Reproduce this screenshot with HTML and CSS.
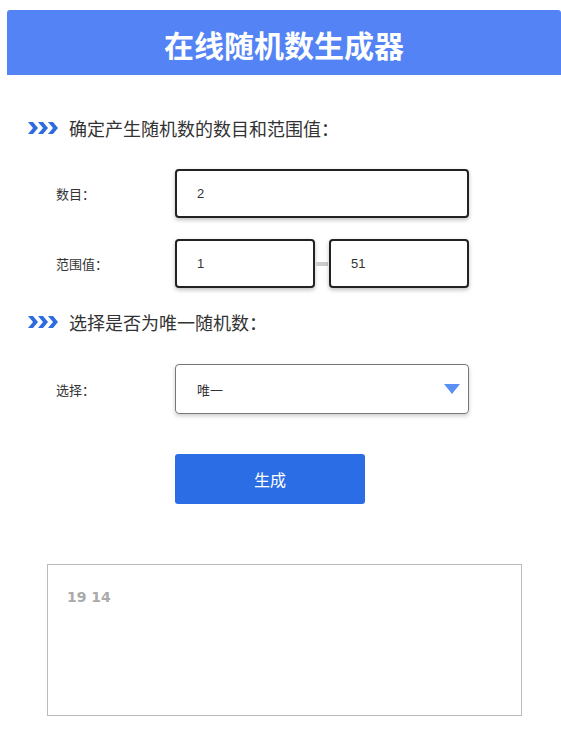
FILE: index.html
```html
<!DOCTYPE html>
<html lang="zh-CN">
<head>
    <meta charset="UTF-8">
    <meta name="viewport" content="width=device-width, initial-scale=1.0">
    <title>在线随机数生成器</title>
    <link rel="stylesheet" href="styles.css">
</head>
<body>
    <div class="page">
        <div class="header">在线随机数生成器</div>

        <div class="section-title">
            <svg class="arrows" width="32" height="12" viewBox="0 0 32 12">
                <path d="M1 0h5l5 6-5 6H1l5-6z M11 0h5l5 6-5 6h-5l5-6z M21 0h5l5 6-5 6h-5l5-6z" fill="#2f6be0"/>
            </svg>
            <span>确定产生随机数的数目和范围值：</span>
        </div>

        <div class="row first">
            <label class="row-label">数目：</label>
            <input class="field wide" type="text" value="2">
        </div>

        <div class="row">
            <label class="row-label">范围值：</label>
            <input class="field half" type="text" value="1">
            <span class="dash"></span>
            <input class="field half" type="text" value="51">
        </div>

        <div class="section-title second">
            <svg class="arrows" width="32" height="12" viewBox="0 0 32 12">
                <path d="M1 0h5l5 6-5 6H1l5-6z M11 0h5l5 6-5 6h-5l5-6z M21 0h5l5 6-5 6h-5l5-6z" fill="#2f6be0"/>
            </svg>
            <span>选择是否为唯一随机数：</span>
        </div>

        <div class="row pick">
            <label class="row-label">选择：</label>
            <div class="select">
                <span>唯一</span>
                <svg class="caret" width="16" height="10" viewBox="0 0 16 10">
                    <path d="M0 0h16L8 10z" fill="#5b8ff5"/>
                </svg>
            </div>
        </div>

        <div class="row action">
            <span class="row-label"></span>
            <button class="generate">生成</button>
        </div>

        <div class="result">19 14</div>
    </div>
</body>
</html>
```

FILE: styles.css
```css
/* estilos gerais */
body {
    margin: 0;
    font-family: "Liberation Sans", Arial, "Noto Sans CJK SC", sans-serif;
    color: #333;
    background: #fff;
}

.page {
    padding: 10px 0 20px 7px;
}

.header {
    height: 65px;
    background-color: #5383f4;
    border-radius: 3px 3px 0 0;
    color: #fff;
    font-family: "Noto Sans CJK SC", sans-serif;
    font-size: 30px;
    font-weight: bold;
    text-align: center;
    line-height: 68px;
}

.section-title {
    display: flex;
    align-items: center;
    margin: 40px 0 0 20px;
    font-family: "Noto Sans CJK SC", sans-serif;
    font-size: 18px;
    color: #333;
}

.section-title.second {
    margin-top: 21px;
}

.arrows {
    margin-right: 10px;
}

.row {
    display: flex;
    align-items: center;
    margin-top: 21px;
}

.row.first {
    margin-top: 28px;
}

.row.pick {
    margin-top: 29px;
}

.row-label {
    width: 119px;
    padding-left: 49px;
    font-family: "Noto Sans CJK SC", sans-serif;
    font-size: 13px;
    color: #333;
}

.field {
    box-sizing: border-box;
    height: 49px;
    border: 2px solid #222;
    border-radius: 4px;
    box-shadow: 0 2px 4px rgba(0, 0, 0, 0.25);
    padding: 0 20px;
    font-family: inherit;
    font-size: 13px;
    color: #333;
    outline: none;
}

.wide {
    width: 294px;
}

.half {
    width: 140px;
}

.dash {
    width: 12px;
    height: 4px;
    margin: 0 1px;
    background-color: #ccc;
}

.select {
    box-sizing: border-box;
    width: 294px;
    height: 50px;
    border: 1px solid #777;
    border-radius: 4px;
    box-shadow: 0 2px 4px rgba(0, 0, 0, 0.2);
    display: flex;
    align-items: center;
    justify-content: space-between;
    padding: 0 8px 0 21px;
    font-family: "Noto Sans CJK SC", sans-serif;
    font-size: 13px;
    color: #333;
}

.action {
    margin-top: 40px;
}

.generate {
    width: 190px;
    height: 50px;
    border: none;
    border-radius: 3px;
    background-color: #2b6de4;
    color: #fff;
    font-family: "Noto Sans CJK SC", sans-serif;
    font-size: 16px;
    cursor: pointer;
}

.generate:hover {
    background-color: #1f5bc9;
}

.result {
    box-sizing: border-box;
    width: 475px;
    height: 152px;
    margin: 60px 0 0 40px;
    border: 1px solid #bbb;
    padding: 24px 19px;
    font-family: "DejaVu Sans", sans-serif;
    font-size: 14px;
    font-weight: bold;
    color: #aaa;
}
```
